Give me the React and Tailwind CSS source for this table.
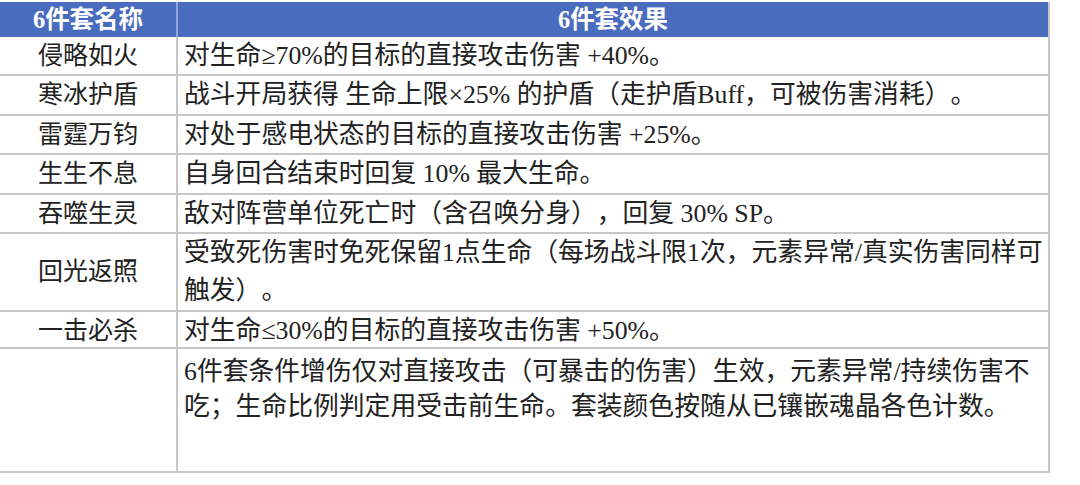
import React from 'react';

// 6-piece set effects table
const rows = [
  { name: '侵略如火', effect: ['对生命≥70%的目标的直接攻击伤害 +40%。'], h: 'h-[39px]' },
  { name: '寒冰护盾', effect: ['战斗开局获得 生命上限×25% 的护盾（走护盾Buff，可被伤害消耗）。'], h: 'h-[40px]' },
  { name: '雷霆万钧', effect: ['对处于感电状态的目标的直接攻击伤害 +25%。'], h: 'h-[39px]' },
  { name: '生生不息', effect: ['自身回合结束时回复 10% 最大生命。'], h: 'h-[40px]' },
  { name: '吞噬生灵', effect: ['敌对阵营单位死亡时（含召唤分身），回复 30% SP。'], h: 'h-[39px]' },
  {
    name: '回光返照',
    effect: ['受致死伤害时免死保留1点生命（每场战斗限1次，元素异常/真实伤害同样可', '触发）。'],
    h: 'h-[78px]',
  },
  { name: '一击必杀', effect: ['对生命≤30%的目标的直接攻击伤害 +50%。'], h: 'h-[37px]' },
];

const font = { fontFamily: '"Liberation Serif", "Noto Sans CJK SC", serif' };

export default function App() {
  return (
    <div className="w-[1080px] h-[485px] bg-white pt-[2px] text-[#222] [text-spacing-trim:space-all]" style={font}>
      <div className="w-[1050px] border-r-2 border-[#c6c6c6]">
        {/* header */}
        <div className="grid grid-cols-[178px_1fr] h-[35px] bg-[#4a6cbe] text-white font-bold text-[24.5px]">
          <div className="flex items-center justify-center border-r-2 border-[#93a8da]">6件套名称</div>
          <div className="flex items-center justify-center">6件套效果</div>
        </div>
        {rows.map((r) => (
          <div key={r.name} className={`grid grid-cols-[178px_1fr] border-b-2 border-[#c6c6c6] ${r.h}`}>
            <div className="flex items-center justify-center border-r-2 border-[#c6c6c6] text-[25px]">{r.name}</div>
            <div className="flex flex-col justify-center pl-[6px] leading-[38px] whitespace-nowrap text-[25.8px]">
              {r.effect.map((l, i) => (
                <div key={i}>{l}</div>
              ))}
            </div>
          </div>
        ))}
        <div className="grid grid-cols-[178px_1fr] border-b-2 border-[#c6c6c6] h-[124px]">
          <div className="border-r-2 border-[#c6c6c6]"></div>
          <div className="pl-[6px] pt-[5px] leading-[35px] whitespace-nowrap text-[25.8px]">
            <div>6件套条件增伤仅对直接攻击（可暴击的伤害）生效，元素异常/持续伤害不</div>
            <div>吃；生命比例判定用受击前生命。套装颜色按随从已镶嵌魂晶各色计数。</div>
          </div>
        </div>
      </div>
    </div>
  );
}
